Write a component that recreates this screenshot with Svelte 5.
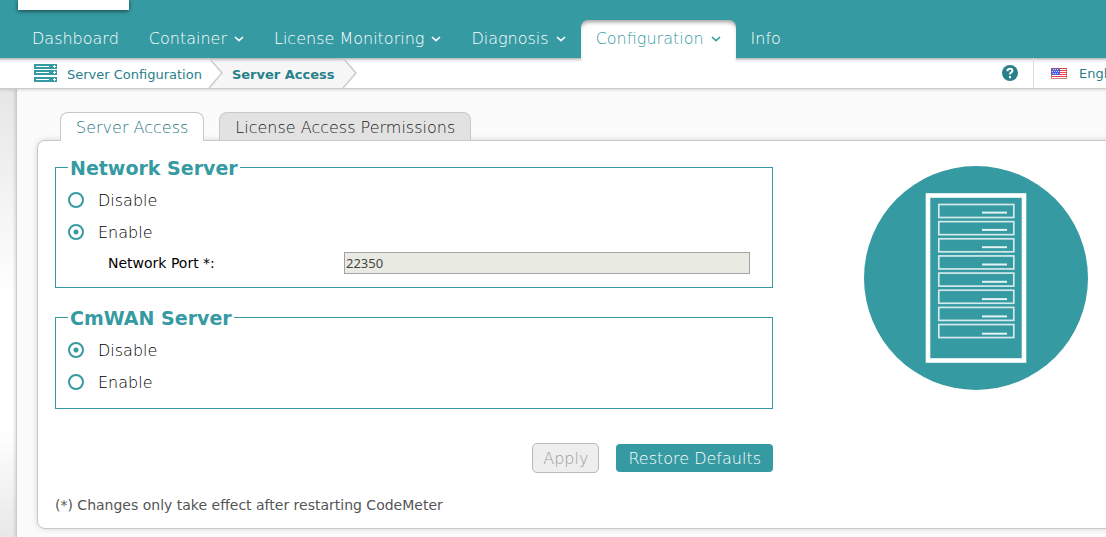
<script lang="ts">
  type NavItem = { label: string; menu: boolean; active?: boolean };

  const navItems: NavItem[] = [
    { label: "Dashboard", menu: false },
    { label: "Container", menu: true },
    { label: "License Monitoring", menu: true },
    { label: "Diagnosis", menu: true },
    { label: "Configuration", menu: true, active: true },
    { label: "Info", menu: false }
  ];

  const rackUnits = [0, 1, 2, 3, 4, 5, 6, 7];

  let networkServer = "enable";
  let cmwanServer = "disable";
  let port = "22350";
</script>

<div class="app">
  <header>
    <div class="logo"></div>
    <nav aria-label="Main">
      {#each navItems as item (item.label)}
        <a href="#{item.label}" class:active={item.active}>
          {item.label}
          {#if item.menu}
            <svg class="caret" viewBox="0 0 10 6" aria-hidden="true">
              <path d="M1 1l4 3.6L9 1" fill="none" stroke="currentColor" stroke-width="1.6" />
            </svg>
          {/if}
        </a>
      {/each}
    </nav>
  </header>

  <div class="subbar">
    <svg class="server-icon" viewBox="0 0 23 18" shape-rendering="crispEdges" aria-hidden="true">
      <path d="M0 0h23v5H0zM0 6h23v5H0zM0 13h23v5H0z" fill="#369aa2" />
      <path d="M2 2.5h13M2 8.5h13M2 15.5h13" stroke="#fff" />
      <path d="M19 2.5h3M20.5 1v3M19 8.5h3M20.5 7v3M19 15.5h3M20.5 14v3" stroke="#fff" />
    </svg>
    <a class="crumb" href="#server-configuration">Server Configuration</a>
    <svg class="chevron first" viewBox="0 0 16 30" aria-hidden="true">
      <path d="M1 0l14 15L1 30h15V0z" fill="#000" fill-opacity=".035" />
      <path d="M1 0l13 15L1 30" fill="none" stroke="#ccc" stroke-width="1.5" />
    </svg>
    <a class="crumb current" href="#server-access">Server Access</a>
    <svg class="chevron" viewBox="0 0 16 30" aria-hidden="true">
      <path d="M0 0h1l13 15L1 30H0z" fill="#000" fill-opacity=".035" />
      <path d="M1 0l13 15L1 30" fill="none" stroke="#ccc" stroke-width="1.5" />
    </svg>

    <div class="tools">
      <a class="help" href="#help" aria-label="Help">
        <svg viewBox="0 0 16 16" aria-hidden="true">
          <circle cx="8" cy="8" r="8" fill="#28808a" />
          <path d="M5.6 6.2V4.9Q6.3 3.8 8 3.8q2.4 0 2.4 1.9 0 1-1.2 1.7T8 9.6" fill="none" stroke="#fff" stroke-width="2" />
          <path d="M7 11h2v2.2H7z" fill="#fff" />
        </svg>
      </a>
      <a class="language" href="#language">
        <svg viewBox="0 0 16 11" aria-hidden="true" shape-rendering="crispEdges">
          <path d="M0 0h16v11H0z" fill="#fff" />
          <path d="M0 .5h16M0 2.5h16M0 4.5h16M0 6.5h16M0 8.5h16" stroke="#f5414b" />
          <path d="M0 0h9v7H0z" fill="#4a5ce0" />
          <path d="M2 1.5h6M1 3.5h7M2 5.5h6" stroke="#d5daff" stroke-dasharray="1 1" />
          <path d="M.5 .5h15v10H.5z" fill="none" stroke="#b2564e" stroke-opacity=".7" />
        </svg>
        English
      </a>
    </div>
  </div>

  <main>
    <div class="tabs">
      <a class="tab selected" href="#server-access">Server Access</a>
      <a class="tab" href="#license-access">License Access Permissions</a>
    </div>

    <section class="panel">
      <form>
        <fieldset>
          <legend>Network Server</legend>
          <label class="option">
            <input type="radio" name="network" value="disable" bind:group={networkServer} />
            Disable
          </label>
          <label class="option">
            <input type="radio" name="network" value="enable" bind:group={networkServer} />
            Enable
          </label>
          <div class="port">
            <label for="port">Network Port *:</label>
            <input id="port" type="text" bind:value={port} disabled />
          </div>
        </fieldset>

        <fieldset>
          <legend>CmWAN Server</legend>
          <label class="option">
            <input type="radio" name="cmwan" value="disable" bind:group={cmwanServer} />
            Disable
          </label>
          <label class="option">
            <input type="radio" name="cmwan" value="enable" bind:group={cmwanServer} />
            Enable
          </label>
        </fieldset>

        <div class="actions">
          <button type="submit" class="apply" disabled>Apply</button>
          <button type="button" class="restore">Restore Defaults</button>
        </div>

        <p class="note">(*) Changes only take effect after restarting CodeMeter</p>
      </form>

      <svg class="rack" viewBox="0 0 224 224" aria-hidden="true">
        <circle cx="112" cy="112" r="112" fill="#369aa2" />
        <rect x="64" y="29.5" width="96" height="165" fill="none" stroke="#fff" stroke-width="4.6" />
        {#each rackUnits as unit}
          <rect x="74.8" y={38.5 + unit * 17.15} width="75" height="13" fill="none" stroke="#d3eaec" stroke-width="1.7" />
          <path d="M118 {46.6 + unit * 17.3}h25" stroke="#e4f3f4" stroke-width="2" />
        {/each}
      </svg>
    </section>
  </main>
</div>

<style>
  :global(body) {
    overflow: hidden;
  }

  .app {
    display: flex;
    flex-direction: column;
    min-width: 1160px;
    min-height: 100vh;
    box-sizing: border-box;
    background: linear-gradient(#e6e6e6 88px, #fff 55%, #fff 80%, #e8e8e8);
    font-family: "DejaVu Sans", Verdana, sans-serif;
    font-size: 16px;
    font-weight: 200;
    color: #000;
  }

  a {
    color: inherit;
    text-decoration: none;
  }

  header {
    position: relative;
    z-index: 2;
    height: 58px;
    padding-left: 17px;
    background: #369aa2;
  }

  .logo {
    width: 111px;
    height: 10px;
    margin-left: 1px;
    background: #fff;
    box-shadow: 0 1px 4px rgba(0, 0, 0, 0.6);
  }

  nav {
    display: flex;
    margin-top: 10px;
    color: #fff;
  }

  nav a {
    display: flex;
    align-items: center;
    gap: 7px;
    height: 36px;
    padding: 0 15px;
  }

  nav a.active {
    padding-bottom: 6px;
    border-radius: 7px 7px 0 0;
    background: #fff;
    color: #369aa2;
    box-shadow: inset 0 4px 4px -2px rgba(0, 0, 0, 0.4);
  }

  .caret {
    width: 10px;
    height: 6px;
    margin-top: 2px;
  }

  .subbar {
    display: flex;
    position: relative;
    align-items: center;
    height: 31px;
    padding: 0 34px;
    box-sizing: border-box;
    border-bottom: 1px solid #ccc;
    background: linear-gradient(#b4b4b4, #e4e4e4 2px, #fff 4px);
    box-shadow: 0 1px 3px rgba(0, 0, 0, 0.15);
    color: #28808a;
    font-size: 13px;
    font-weight: 400;
  }

  .server-icon {
    width: 23px;
    height: 18px;
    margin-right: 10px;
  }

  .crumb {
    height: 30px;
    padding-top: 2px;
    box-sizing: border-box;
    line-height: 30px;
  }

  .current {
    padding-right: 7px;
    padding-left: 8px;
    background: rgba(0, 0, 0, 0.035);
    font-weight: 700;
  }

  .chevron {
    width: 16px;
    height: 30px;
  }

  .chevron.first {
    margin-left: 6px;
  }

  .tools {
    display: flex;
    align-items: center;
    height: 100%;
    margin-left: auto;
  }

  .help {
    display: flex;
    padding-right: 15px;
  }

  .help svg {
    width: 16px;
    height: 16px;
  }

  .language {
    display: flex;
    align-items: center;
    gap: 12px;
    height: 100%;
    padding-left: 17px;
    border-left: 1px solid #ddd;
  }

  .language svg {
    width: 16px;
    height: 11px;
  }

  main {
    flex: 1;
    margin-left: 16px;
    padding: 23px 20px 8px;
    border-left: 1px solid #ccc;
    background: #fbfbfb;
    box-shadow: -1px 0 3px rgba(0, 0, 0, 0.15);
  }

  .tabs {
    display: flex;
    gap: 15px;
    padding-left: 23px;
  }

  .tab {
    height: 27px;
    padding: 0 15px;
    border: 1px solid #c8c8c8;
    border-bottom: 0;
    border-radius: 8px 8px 0 0;
    background: #e2e2e2;
    color: #222;
    line-height: 30px;
  }

  .tab.selected {
    position: relative;
    z-index: 1;
    margin-bottom: -1px;
    padding-bottom: 1px;
    background: #fff;
    color: #1f747d;
  }

  .panel {
    display: grid;
    grid-template-columns: 1fr 258px;
    gap: 91px;
    padding: 14px 17px 13px;
    border: 1px solid #c8c8c8;
    border-radius: 8px;
    background: #fff;
    box-shadow: 0 0 6px rgba(0, 0, 0, 0.15);
  }

  fieldset {
    min-width: 0;
    margin: 0 0 17px;
    padding: 5px 12px 10px;
    border: 1px solid #369aa2;
  }

  legend {
    padding: 2px 2px 0;
    color: #369aa2;
    font-size: 19px;
    font-weight: 700;
    line-height: 22px;
  }

  .option {
    display: flex;
    align-items: center;
    gap: 14px;
    height: 32px;
  }

  .option input {
    appearance: none;
    width: 16px;
    height: 16px;
    margin: 0;
    border: 2px solid #369aa2;
    border-radius: 50%;
    background: #fff;
  }

  .option input:checked {
    background: radial-gradient(circle, #369aa2 2px, #fff 3px);
  }

  .port {
    display: grid;
    grid-template-columns: 236px 1fr;
    align-items: center;
    height: 29px;
    padding: 0 10px 0 40px;
    font-size: 14px;
    font-weight: 400;
  }

  .port input {
    width: 100%;
    height: 22px;
    padding: 0 1px;
    box-sizing: border-box;
    border: 1px solid #a3a3a3;
    background: #e9ebe3;
    color: #444;
    font-family: "Noto Sans", sans-serif;
    font-size: 13px;
  }

  .actions {
    display: flex;
    align-items: center;
    justify-content: flex-end;
    gap: 17px;
    padding-top: 17px;
  }

  button {
    height: 28px;
    padding: 0 10px;
    border: 0;
    border-radius: 4px;
    font: inherit;
  }

  .apply {
    height: 30px;
    border: 1px solid #b8b8b8;
    border-radius: 5px;
    background: #eee;
    color: #999;
  }

  .restore {
    padding: 0 12px;
    background: #369aa2;
    color: #fff;
  }

  .note {
    margin: 22px 0 0;
    color: #555;
    font-size: 14px;
    font-weight: 400;
    line-height: 20px;
  }

  .rack {
    width: 224px;
    height: 224px;
    margin-top: 11px;
  }
</style>
